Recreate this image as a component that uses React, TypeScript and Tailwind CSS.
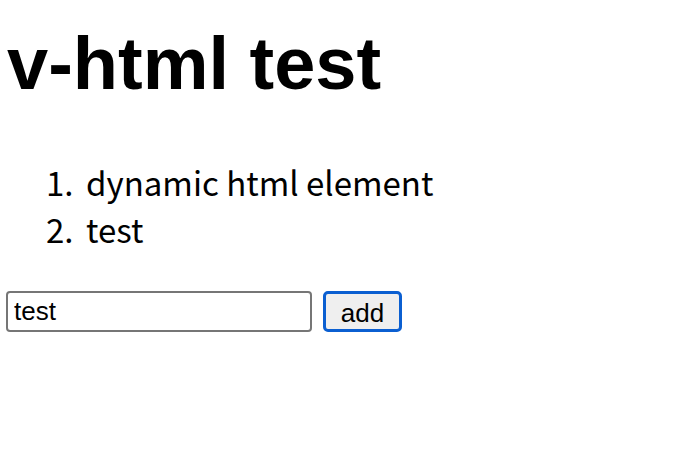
import React from "react";

export default function App() {
  const items = ["dynamic html element", "test"];
  return (
    <div className="bg-white text-black h-[464px] overflow-hidden pt-[23px] flex flex-col">
      <h1 className="m-0 ml-[7px] font-bold text-[74px] leading-[82px] font-['Liberation_Sans',Arial,sans-serif]">
        v-html test
      </h1>
      <ol className="mt-[54px] flex flex-col font-['Noto_Sans_CJK_JP','Liberation_Sans',sans-serif] text-[33px] leading-[47px]">
        {items.map((t, i) => (
          <li key={i} className="flex">
            <span className="w-[86px] pl-[46px]">{i + 1}.</span>
            <span>{t}</span>
          </li>
        ))}
      </ol>
      <div className="flex items-center mt-[38px] ml-[6px] gap-[11px] font-['Liberation_Sans',Arial,sans-serif]">
        <input
          defaultValue="test"
          className="w-[306px] h-[41px] border-2 border-[#767676] rounded-[4px] px-[6px] text-[26px] text-black outline-none"
        />
        <button className="w-[79px] h-[41px] border-[3px] border-[#0b5fd1] rounded-[5px] bg-[#efefef] text-[26px] text-black">
          add
        </button>
      </div>
    </div>
  );
}
